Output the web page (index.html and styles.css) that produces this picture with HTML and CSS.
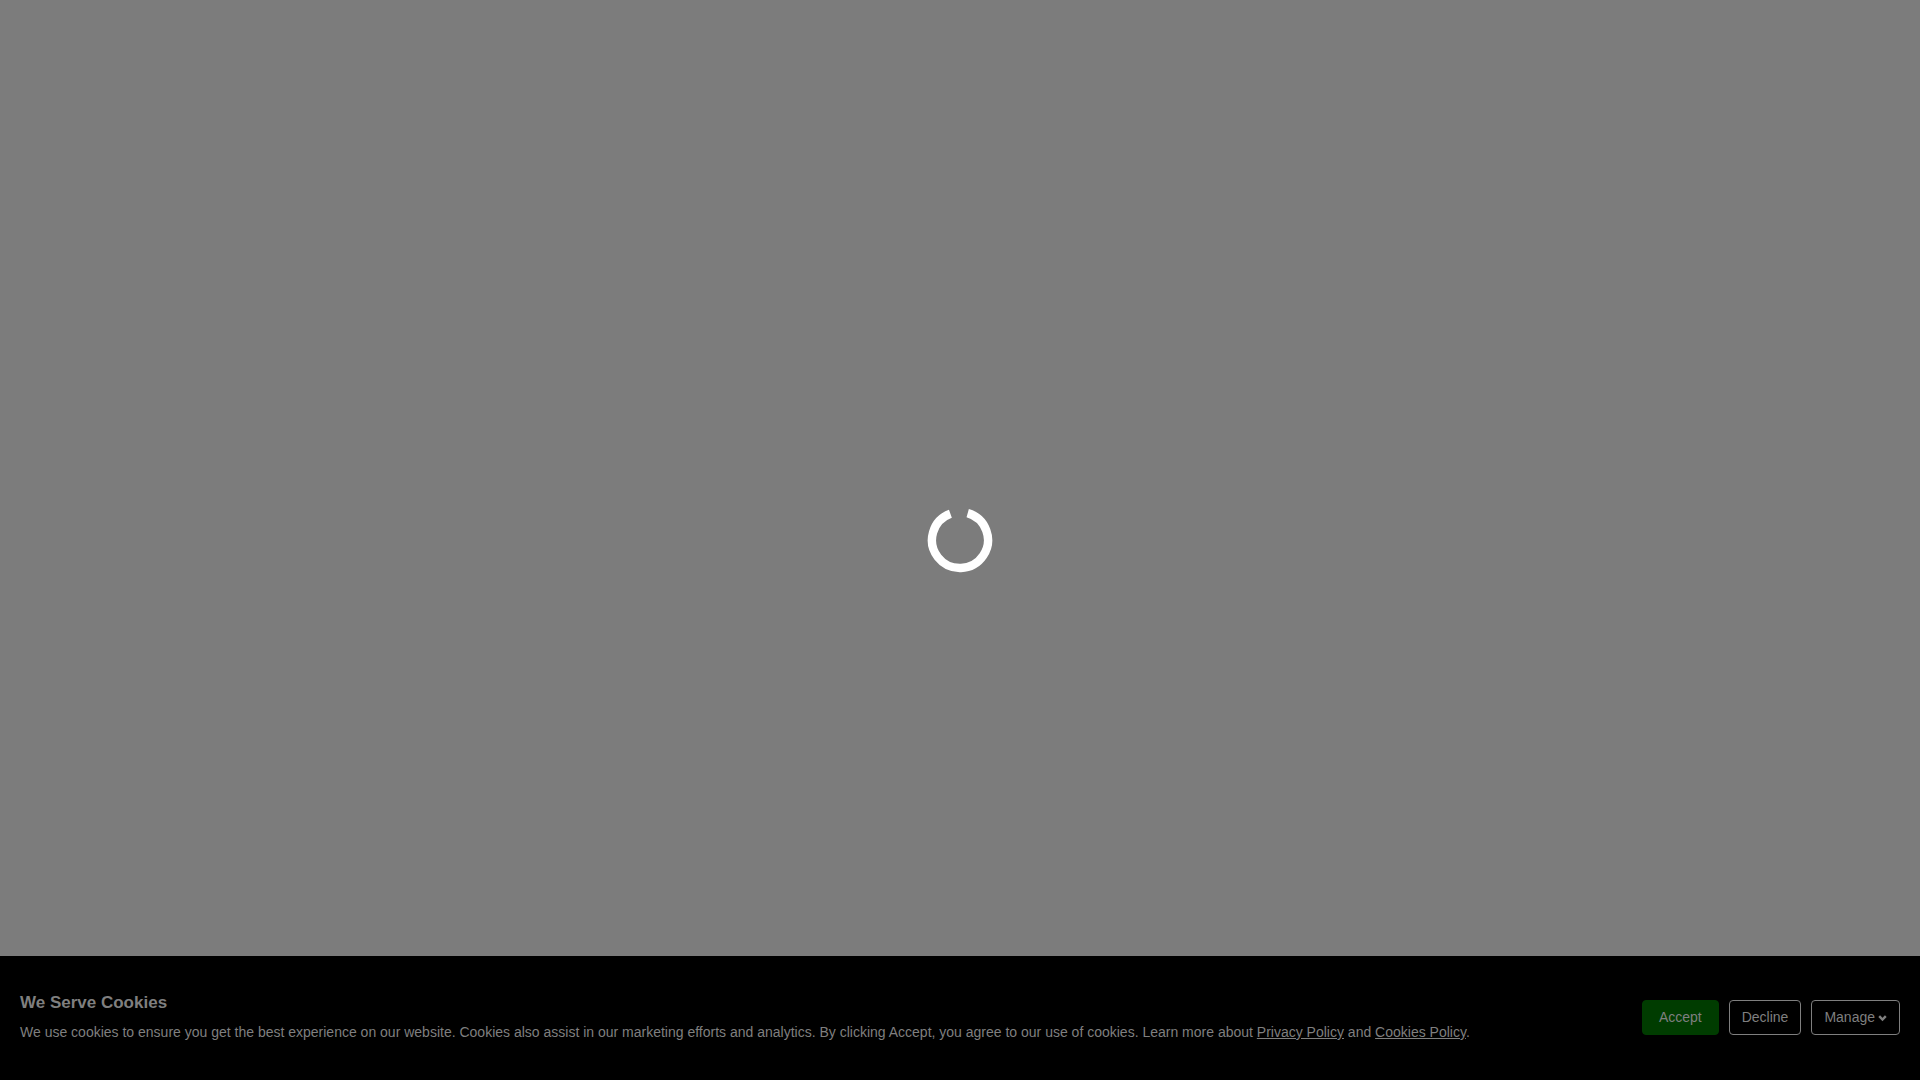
FILE: index.html
```
<!DOCTYPE html>
<html lang="en">
<head>
  <meta charset="UTF-8" />
  <meta name="viewport" content="width=device-width, initial-scale=1.0"/>
  <title>We Serve Cookies</title>
  <link rel="stylesheet" href="styles.css">
</head>
<body>
  <main class="loader" role="status" aria-label="Loading">
    <svg class="spinner" viewBox="0 0 66 66" fill="none" stroke="#fff" stroke-width="8.4">
      <path d="M40.7 6.1A28 28 0 1 1 23.4 6.7"/>
    </svg>
  </main>

  <section class="cookie-bar">
    <div class="cookie-text">
      <h2>We Serve Cookies</h2>
      <p>We use cookies to ensure you get the best experience on our website. Cookies also assist in our marketing efforts and analytics. By clicking Accept, you agree to our use of cookies. Learn more about <a href="#">Privacy Policy</a> and <a href="#">Cookies Policy</a>.</p>
    </div>
    <div class="cookie-actions">
      <button type="button" class="btn btn-accept">Accept</button>
      <button type="button" class="btn">Decline</button>
      <button type="button" class="btn">Manage
        <svg class="chevron" viewBox="0 0 9 9" fill="none" stroke="currentColor" stroke-width="2.4">
          <path d="M1.2 3.2L4.5 6.5L7.8 3.2"/>
        </svg>
      </button>
    </div>
  </section>
</body>
</html>
```

FILE: styles.css
```
* {
  box-sizing: border-box;
}

body {
  margin: 0;
  min-height: 100vh;
  display: flex;
  flex-direction: column;
  background: #7c7c7c;
  color: #7f7f7f;
  font-family: "Liberation Sans", Arial, sans-serif;
  font-size: 14px;
}

/* spinner sits in the middle of the window, over the page */
.loader {
  position: fixed;
  inset: 0;
  display: flex;
  align-items: center;
  justify-content: center;
  pointer-events: none;
}

.spinner {
  width: 66px;
  height: 66px;
}

.cookie-bar {
  margin-top: auto;
  display: flex;
  align-items: center;
  justify-content: space-between;
  gap: 20px;
  padding: 35px 20px 37px;
  background: #000;
}

.cookie-text h2 {
  margin: 0 0 6px;
  font-size: 17px;
  line-height: 24px;
}

.cookie-text p {
  margin: 0;
  line-height: 22px;
}

.cookie-text a {
  color: inherit;
}

.cookie-actions {
  display: flex;
  gap: 10px;
}

.btn {
  display: flex;
  align-items: center;
  gap: 3px;
  height: 35px;
  padding: 0 12px;
  border: 1px solid #7f7f7f;
  border-radius: 4px;
  background: transparent;
  color: inherit;
  font: inherit;
  cursor: pointer;
}

.btn-accept {
  padding: 0 16px;
  border-color: #003c00;
  background: #003c00;
}

.chevron {
  width: 9px;
  height: 9px;
}
```
